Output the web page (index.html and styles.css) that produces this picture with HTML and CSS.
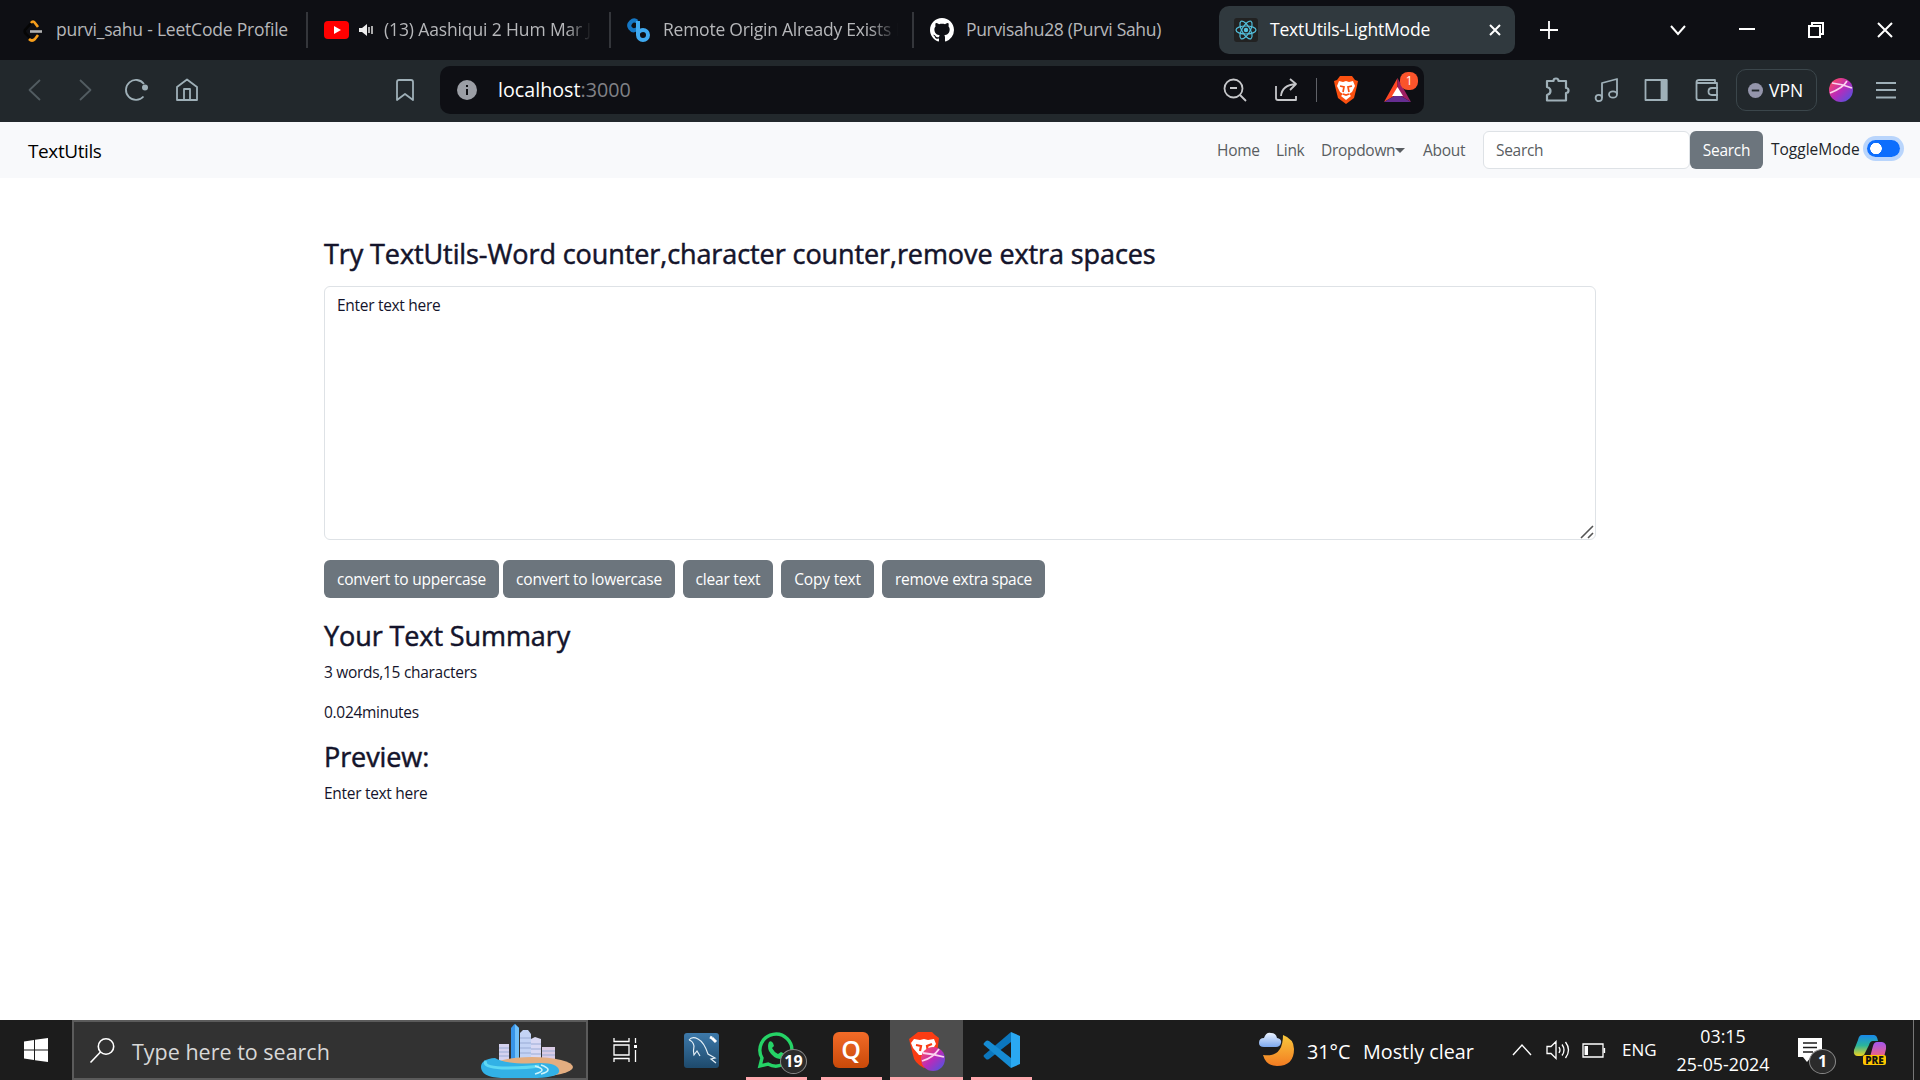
FILE: index.html
```html
<!DOCTYPE html>
<html lang="en">
<head>
<meta charset="utf-8">
<title>TextUtils-LightMode</title>
<link rel="stylesheet" href="styles.css">
</head>
<body>
<header class="tabs">
  <div class="tab t1">
    <svg class="fav" viewBox="0 0 24 24" fill="none" stroke-width="2.6"><path d="M12 2 3 12q-1 2 1 4l4 4" stroke="#050505"/><path d="M9 5q2-3 4 0l3 4M7 21q3 3 6 0l3-4" stroke="#f89f1b"/><path d="M8 13.500h12" stroke="#b3b3b3"/></svg>
    <span class="lbl l1">purvi_sahu - LeetCode Profile</span>
  </div>
  <div class="tab t2">
    <svg class="yt" viewBox="0 0 25 18"><rect width="25" height="18" rx="4" fill="#f00"/><path d="m10 5 7 4-7 4z" fill="#fff"/></svg>
    <svg class="snd" viewBox="0 0 16 14"><path d="M1 5h3l5-4v12L4 9H1z" fill="#eee"/><path d="M11 4v6M14 3v8" stroke="#eee" stroke-width="1.4"/></svg>
    <span class="lbl l2 fade">(13) Aashiqui 2 Hum Mar J</span>
  </div>
  <div class="tab t3">
    <svg class="fav" viewBox="0 0 24 24" fill="none" stroke-width="4"><path d="M10 3.500Q7 1 4 4T3 10q3 4 7 1" stroke="#1577c5"/><path d="M11 3v14a5 5 0 1 0 5-5q-3 0-5 3" stroke="#3fa9f0"/></svg>
    <span class="lbl l3 fade">Remote Origin Already Exists I</span>
  </div>
  <div class="tab t4">
    <svg class="fav" viewBox="0 0 16 16" fill="#fff"><path d="M8 0C3.58 0 0 3.58 0 8c0 3.54 2.29 6.53 5.47 7.59.4.07.55-.17.55-.38 0-.19-.01-.82-.01-1.49-2.01.37-2.53-.49-2.69-.94-.09-.23-.48-.94-.82-1.13-.28-.15-.68-.52-.01-.53.63-.01 1.08.58 1.23.82.72 1.21 1.87.87 2.33.66.07-.52.28-.87.51-1.07-1.78-.2-3.64-.89-3.64-3.95 0-.87.31-1.59.82-2.15-.08-.2-.36-1.02.08-2.12 0 0 .67-.21 2.2.82.64-.18 1.32-.27 2-.27s1.36.09 2 .27c1.53-1.04 2.2-.82 2.2-.82.44 1.1.16 1.92.08 2.12.51.56.82 1.27.82 2.15 0 3.07-1.87 3.75-3.65 3.95.29.25.54.73.54 1.48 0 1.07-.01 1.93-.01 2.2 0 .21.15.46.55.38A8.01 8.01 0 0 0 16 8c0-4.42-3.58-8-8-8"/></svg>
    <span class="lbl l4">Purvisahu28 (Purvi Sahu)</span>
  </div>
  <div class="tab t5">
    <svg class="fav" viewBox="0 0 24 24" fill="none" stroke="#53c1de" stroke-width="1.2"><rect width="24" height="24" rx="3" fill="#222" stroke="none"/><ellipse cx="12" cy="12" rx="10" ry="4"/><ellipse cx="12" cy="12" rx="10" ry="4" transform="rotate(60 12 12)"/><ellipse cx="12" cy="12" rx="10" ry="4" transform="rotate(120 12 12)"/><circle cx="12" cy="12" r="1.6" fill="#53c1de"/></svg>
    <span class="lbl l5">TextUtils-LightMode</span>
    <svg class="x" viewBox="0 0 12 12"><path d="m1 1 10 10M11 1 1 11" stroke="#fff" stroke-width="2"/></svg>
  </div>
  <svg class="plus" viewBox="0 0 18 18"><path d="M9 0v18M0 9h18" stroke="#fff" stroke-width="1.8"/></svg>
  <div class="win">
    <svg viewBox="0 0 16 16"><path d="m1 4 7 8 7-8"/></svg>
    <svg viewBox="0 0 16 16"><path d="M0 7h16"/></svg>
    <svg viewBox="0 0 16 16"><path d="M1 4h11v11H1zM4 4V1h11v11h-3"/></svg>
    <svg viewBox="0 0 16 16"><path d="m1 1 14 14M15 1 1 15"/></svg>
  </div>
</header>

<div class="toolbar">
  <svg class="i back dim" viewBox="0 0 24 24"><path d="M18 2 7.500 12 18 22"/></svg>
  <svg class="i fwd dim" viewBox="0 0 24 24"><path d="m6 2 10.500 10L6 22"/></svg>
  <svg class="i reload" viewBox="0 0 24 24"><path d="M19.500 18.500A10 10 0 1 1 20 6"/><circle cx="21" cy="9.500" r="3" fill="#9fb0b8" stroke="none"/></svg>
  <svg class="i home" viewBox="0 0 24 24"><path d="M2 9 12 1.500 22 9v13H2zM9 22V11h6v11"/></svg>
  <svg class="i mark" viewBox="0 0 24 24"><path d="M4 4q0-2 2-2h12q2 0 2 2v18l-8-6-8 6z"/></svg>
  <div class="url">
    <svg class="info" viewBox="0 0 20 20"><circle cx="10" cy="10" r="10" fill="#9b9ea5"/><path d="M10 9v6M10 5v2" stroke="#0f1014" stroke-width="2"/></svg>
    <span class="host"><b>localhost</b>:3000</span>
    <svg class="i lt zoom" viewBox="0 0 24 24"><circle cx="10.500" cy="10.500" r="9"/><path d="M7 10h7m3 7 6 6"/></svg>
    <svg class="i lt share" viewBox="0 0 24 24"><path d="M2 8v12q0 2 2 2h18v-4M7 18Q8 7 22 6M16 1l6 5-6 6"/></svg>
    <span class="bar"></span>
    <svg class="brave" viewBox="0 0 24 28"><path d="M6 0h12l3 4 3 1-1 5-3 12-8 6-8-6L1 10 0 5l3-1z" fill="#fb5010"/><path d="m5 5 4 1 3-1 3 1 4-1 2 5-3 6-3 2 2 2-5 4-5-4 2-2-3-2-3-6z" fill="#fff"/><path d="m6 10 4 1-1 5m9-6-4 1 1 5m-6 2 3 1 3-1" fill="none" stroke="#fb5010" stroke-width="1.700"/></svg>
    <span class="bat"><svg viewBox="0 0 27 24"><path d="M13.500 0 0 24l13.500-8z" fill="#ff4724"/><path d="m13.500 0 13.500 24-13.500-8z" fill="#9e1f63"/><path d="M0 24h27l-13.500-8z" fill="#662d91"/><path d="m13.500 9 5.500 9H8z" fill="#fff"/></svg><em>1</em></span>
  </div>
  <svg class="i puz" viewBox="0 0 24 24"><path stroke-width="2.200" d="M2 3h6.500q0-2.500 2.500-2.500T13.500 3H21v7q2.500 0 2.500 2.500T21 15v7.500H2V17q3.500-1 3.500-4T2 9z"/></svg>
  <svg class="i mus" viewBox="0 0 24 24"><path d="M8 20V5l15-4v15"/><circle cx="4.800" cy="20" r="3.200"/><ellipse cx="19" cy="16.500" rx="4" ry="3.200"/></svg>
  <svg class="i pan" viewBox="0 0 24 24"><path d="M1.500 2h21v20h-21z"/><path d="M17.500 2h5v20h-5z" fill="#9fb0b8"/></svg>
  <svg class="i wal" viewBox="0 0 24 24"><path d="M20 5V2H4Q1.500 2 1.500 4v16q0 2 2 2H22V5H4Q2 5 1.500 4M23 10h-6q-3.500 0-3.500 3.500T17 17h6"/></svg>
  <div class="vpn"><svg viewBox="0 0 16 16"><circle cx="8" cy="8" r="8" fill="#9495ab"/><path d="M4 8h8" stroke="#22282c" stroke-width="2"/></svg><span>VPN</span></div>
  <svg class="orb" viewBox="0 0 24 24"><defs><linearGradient id="g" x1="0" y1="0" x2="1" y2="1"><stop offset=".1" stop-color="#fa4a66"/><stop offset=".5" stop-color="#b92bba"/><stop offset="1" stop-color="#3e5be6"/></linearGradient></defs><circle cx="12" cy="12" r="12" fill="url(#g)"/><path d="M3 5q10 1 20 5M1 15Q14 10 18 3" stroke="#fbd3ef" stroke-width="1.600" fill="none"/></svg>
  <svg class="i menu" viewBox="0 0 24 24"><path d="M2 5h20M2 12h20M2 19.500h20"/></svg>
</div>

<nav class="nav">
  <a class="brand">TextUtils</a>
  <a class="n1">Home</a><a class="n2">Link</a><a class="n3">Dropdown<span class="caret"></span></a><a class="n4">About</a>
  <div class="field">Search</div><button class="btn sbtn">Search</button>
  <span class="mode">ToggleMode</span><span class="switch"></span>
</nav>

<main class="main">
  <h3>Try TextUtils-Word counter,character counter,remove extra spaces</h3>
  <div class="area">Enter text here
    <svg class="grip" viewBox="0 0 14 14"><path d="M1 13 13 1M8 13l5-5" stroke="#555" stroke-width="1.600"/></svg></div>
  <div class="btns">
    <button class="btn b1">convert to uppercase</button>
    <button class="btn b2">convert to lowercase</button>
    <button class="btn b3">clear text</button>
    <button class="btn b4">Copy text</button>
    <button class="btn b5">remove extra space</button>
  </div>
  <h3>Your Text Summary</h3>
  <p>3 words,15 characters</p>
  <p>0.024minutes</p>
  <h3>Preview:</h3>
  <p>Enter text here</p>
</main>

<footer class="task">
  <svg class="start" viewBox="0 0 24 24" fill="#fff"><path d="m0 3.400 10-1.400v9.400H0zM11 1.800 24 0v11.400H11zM0 12.500h10V22L0 20.600zM11 12.500h13V24l-13-1.800z"/></svg>
  <div class="find">
    <svg class="glass" viewBox="0 0 25 25" fill="none" stroke="#fff" stroke-width="1.600"><circle cx="16" cy="8.500" r="7.700"/><path d="M10.500 14 .5 24.500"/></svg>
    <span>Type here to search</span>
    <svg class="city" viewBox="0 0 92 54"><path d="M18 20h10v20H18z" fill="#d4d2ee"/><path d="M30 4l3.500-4L38 4v34h-8z" fill="#3794e8"/><path d="M34 0l4 4v34h-4z" fill="#6fc0fa"/><path d="M39 9l3-3h5l3 4v28H39z" fill="#c3d3f5"/><path d="M50 15l4-2 6 2v23H50z" fill="#d9d9f4"/><path d="M61 23h13v16H61z" fill="#d9cbe5"/><path d="M18 24h10m-10 4h10m-10 4h10M39 14h11m-11 5h11m-11 5h11m-11 5h11m0-9h10m-10 5h10m-10 5h10m1-3h13m-13 4h13" stroke="#9aabd6" stroke-width="1.200"/><ellipse cx="51" cy="43" rx="41" ry="10" fill="#e3ad80"/><path d="M14 34Q0 35 0 43q0 10 20 11h36q24-1 22-8-2-7-18-7-34 2-46-5z" fill="#32b1e6"/><path d="M5 37q-4 6 16 7 26 0 37-2" stroke="#5fd8f3" stroke-width="3" fill="none"/><path d="M54 42q14 4 0 8m6-9q14 5 0 9" stroke="#c9f3fb" stroke-width="1.600" fill="none"/></svg>
  </div>
  <svg class="tv" viewBox="0 0 25 24" fill="none" stroke="#fff" stroke-width="1.300"><path d="M1 0v3.500h15V0M1 24v-3.500h15V24M1 7h15v10H1zM22.500 0v5M22.500 12v12"/><path d="M21 7h3v3h-3z" fill="#fff" stroke="none"/></svg>
  <svg class="sql" viewBox="0 0 35 35"><defs><linearGradient id="s" x2="0" y2="1"><stop stop-color="#3d79aa"/><stop offset="1" stop-color="#1e4a6c"/></linearGradient></defs><rect width="35" height="35" rx="3" fill="url(#s)"/><path d="M5 7q3-4 9-1 6 3 10 15l7 4-4 1 5 4M5 7q4 1 5 6-1 5 0 9l3-4 3 5" fill="none" stroke="#e4eff6" stroke-width="1.200"/><path d="m26 4 2 1m0 0 4 4" fill="none" stroke="#fff" stroke-width="3"/></svg>
  <div class="app wa"><svg viewBox="0 0 36 36"><path d="M2 34 4 26A16 16 0 1 1 10 32z" fill="none" stroke="#25d366" stroke-width="3.400"/><path d="M11 10q2-2 4 1l1 3-2 2q2 4 6 6l3-2 4 2q0 5-5 5-7-1-11-8-2-5 0-9" fill="#25d366"/></svg><em>19</em></div>
  <div class="app q"><span>Q</span></div>
  <div class="app br"><svg viewBox="0 0 36 40"><path d="M9 0h14l3 3 4 3-2 16q-3 7-13 14Q5 31 4 23L0 7l4-3z" fill="#fb3c13"/><path d="m5 7 6 1 4-1 4 1 6-1 2 5-6 9-3 2-8 0-6-7-2-5z" fill="#fff"/><path d="m7 13 5 1-1 5m12-7-5 2 1 6" stroke="#fb3c13" stroke-width="2.200" fill="none"/><circle cx="24" cy="27" r="12" fill="url(#g)"/><path d="M14 21q10 1 21 4M13 29q11-3 17-12" stroke="#fbd3ef" stroke-width="1.800" fill="none"/></svg></div>
  <div class="app vs"><svg viewBox="0 0 36 36"><path d="M27 0v10L5 27q-2 1-3 0l-2-2q-1-1 0-2z" fill="#0b76bd"/><path d="M27 36V26L5 9Q3 8 2 9l-2 2q-1 1 0 2z" fill="#168bd2"/><path d="m27 0 9 4v28l-9 4z" fill="#2aa8f2"/></svg></div>
  <svg class="moon" viewBox="0 0 35 36"><defs><linearGradient id="o" x2="0" y2="1"><stop stop-color="#f9c83c"/><stop offset="1" stop-color="#f37c22"/></linearGradient><linearGradient id="c" x2="0" y2="1"><stop stop-color="#eaf2ff"/><stop offset="1" stop-color="#7ca8ee"/></linearGradient></defs><path d="M24 3q11 4 11 14 0 17-17 17Q7 34 4 23q20 3 20-20z" fill="url(#o)"/><path d="M5 15q-5 0-5-4 0-5 5-5Q7 0 12 1q5 0 6 5 5 1 4 5-1 4-5 4z" fill="url(#c)"/></svg>
  <span class="temp">31°C</span><span class="wx">Mostly clear</span>
  <svg class="up" viewBox="0 0 18 12"><path d="m0 11 9-10 9 10" fill="none" stroke="#fff" stroke-width="1.400"/></svg>
  <svg class="vol" viewBox="0 0 24 20" fill="none" stroke="#fff" stroke-width="1.300"><path d="M1 6.500h4l5-5v17l-5-5H1zM13 7q2 3 0 6M16 4.500q4 5.500 0 11M19.500 2q6 8 0 16"/></svg>
  <svg class="batt" viewBox="0 0 23 13"><path d="M1 0h20v13H1zM22.500 4v5" fill="none" stroke="#fff" stroke-width="1.300"/><path d="M2.500 2H6v9H2.500z" fill="#fff"/></svg>
  <span class="eng">ENG</span>
  <div class="clock"><span>03:15</span><span>25-05-2024</span></div>
  <div class="note"><svg viewBox="0 0 24 24"><path d="M0 0h24v19H13l-4 5-4-5H0z" fill="#fff"/><path d="M5 5h14M5 9.500h14M5 14h10" stroke="#1c1c1c" stroke-width="1.300"/></svg><em>1</em></div>
  <div class="cop"><svg viewBox="0 0 32 30"><defs><linearGradient id="p" x2="0" y2="1"><stop stop-color="#1888ea"/><stop offset=".5" stop-color="#2bb59b"/><stop offset="1" stop-color="#f0d41e"/></linearGradient><linearGradient id="r" x2="0" y2="1"><stop stop-color="#a456f0"/><stop offset="1" stop-color="#f2637a"/></linearGradient></defs><path d="M8 0h12q3 0 4 6h-5q-3 0-4 4l-4 8q-1 3-4 3H4q-5 0-4-6L4 5q1-5 4-5" fill="url(#p)"/><path d="M23 7h5q5 1 4 7l-2 8H16l3-11q1-4 4-4" fill="url(#r)"/></svg><em>PRE</em></div>
  <span class="edge"></span>
</footer>
</body>
</html>
```
FILE: styles.css
```css
* { box-sizing: border-box; }
body { margin: 0; width: 1920px; height: 1080px; overflow: hidden; display: flex; flex-direction: column; background: #fff; font: 15.5px/24px "Open Sans", "Noto Sans", sans-serif; letter-spacing: -.3px; color: #212529; }
svg { display: block; flex: none; overflow: visible; }
em, b { font-style: normal; font-weight: inherit; }
span, a { white-space: nowrap; }

.tabs { height: 60px; background: #0e0f14; display: flex; align-items: center; flex: none; }
.tab { display: flex; align-items: center; height: 36px; color: #b6b7ba; font-size: 17.5px; border-right: 2px solid #34363b; flex: none; }
.t1 { width: 308px; padding-left: 22px; }
.t2 { width: 303px; padding-left: 16px; }
.t3 { width: 303px; padding-left: 16px; }
.t4 { width: 305px; padding-left: 16px; border: 0; }
.t5 { width: 296px; height: 48px; padding-left: 15px; border: 0; border-radius: 10px; background: #30393e; color: #fff; }
.fav { width: 24px; height: 24px; }
.yt { width: 25px; height: 18px; }
.snd { width: 16px; height: 14px; margin-left: 9px; }
.lbl { margin-left: 12px; margin-top: -3px; }
.l1 { margin-left: 10px; letter-spacing: -.21px; }
.l2 { margin-left: 10px; width: 212px; letter-spacing: -.13px; }
.l3 { width: 240px; letter-spacing: -.24px; }
.l4 { letter-spacing: -.33px; }
.l5 { width: 206px; letter-spacing: -.18px; }
.fade { -webkit-mask-image: linear-gradient(90deg, #000 86%, transparent 98%); mask-image: linear-gradient(90deg, #000 86%, transparent 98%); }
.x { width: 12px; height: 12px; margin-left: 13px; }
.plus { width: 18px; height: 18px; margin-left: 25px; }
.win { display: flex; gap: 53px; margin-left: 112px; }
.win svg { width: 16px; height: 16px; fill: none; stroke: #fff; stroke-width: 2; }

.toolbar { height: 62px; padding-bottom: 2px; background: #22282c; display: flex; align-items: center; flex: none; }
.i { width: 24px; height: 24px; fill: none; stroke: #9fb0b8; stroke-width: 1.8; stroke-linejoin: round; }
.dim { stroke: #525c61; }
.lt { stroke: #c6c7ca; }
.back { margin-left: 22px; }
.fwd { margin-left: 28px; }
.reload { margin-left: 26px; }
.home { margin-left: 27px; }
.mark { margin-left: 194px; }
.url { width: 984px; height: 48px; margin-left: 23px; background: #0e0f14; border-radius: 10px; display: flex; align-items: center; }
.info { width: 20px; height: 20px; margin-left: 17px; }
.host { width: 725px; margin-left: 21px; font-size: 19.700px; letter-spacing: 0; color: #808186; }
.host b { color: #fff; }
.share { margin-left: 27px; }
.bar { width: 1px; height: 24px; background: #606268; margin-left: 18px; }
.brave { width: 24px; height: 28px; margin-left: 17px; }
.bat { position: relative; margin-left: 26px; }
.bat svg { width: 27px; height: 24px; }
.bat em { position: absolute; left: 16px; top: -6px; width: 18px; height: 18px; border-radius: 8px; background: #fb542b; color: #fff; font-size: 12px; line-height: 18px; text-align: center; }
.puz { margin-left: 121px; }
.mus { margin-left: 25px; }
.pan { margin-left: 26px; }
.wal { margin-left: 27px; }
.vpn { width: 81px; height: 42px; margin-left: 17px; border: 1.5px solid #3b464b; border-radius: 10px; display: flex; align-items: center; gap: 6px; padding-left: 11px; color: #fff; font-size: 17.5px; letter-spacing: 0; }
.vpn svg { width: 15px; height: 15px; }
.vpn span { margin-top: -1px; }
.orb { width: 24px; height: 24px; margin-left: 12px; }
.menu { margin-left: 21px; }

.nav { height: 56px; background: #f8f9fb; display: flex; align-items: center; flex: none; color: #595d61; }
.brand { width: 1189px; margin-left: 28px; padding-top: 1px; font-size: 19px; letter-spacing: -.4px; color: #000; }
.n1 { width: 59px; }
.n2 { width: 45px; }
.n3 { width: 102px; display: flex; align-items: center; }
.caret { border: 5px solid transparent; border-top-color: #595d61; border-bottom: 0; }
.n4 { width: 60px; }
.field { width: 207px; height: 38px; border: 1px solid #dee2e6; border-radius: 6px; background: #fff; padding: 6px 12px; }
.btn { height: 38px; border: 0; border-radius: 6px; background: #6c757d; color: #fff; font: inherit; letter-spacing: -.2px; padding: 0; text-align: center; }
.sbtn { width: 73px; letter-spacing: -.3px; }
.mode { width: 97px; margin-left: 8px; color: #212529; margin-top: -2px; letter-spacing: 0; }
.switch { width: 33px; height: 17px; border-radius: 9px; background: radial-gradient(circle at 9px 8.5px, #fff 5.5px, #0d6efd 6px); box-shadow: 0 0 0 4px #b9d5fc; margin: -3px 0 0 -1px; }

.main { width: 1272px; margin: 59px 0 0 324px; flex: 1; color: #14142b; }
h3 { margin: 0 0 7px; font-size: 27px; line-height: 34px; font-weight: 500; letter-spacing: -.09px; -webkit-text-stroke: .5px #14142b; white-space: nowrap; }
p { margin: 0 0 16px; }
.area { position: relative; height: 254px; margin-top: 15px; border: 1px solid #dee2e6; border-radius: 6px; padding: 6px 12px; }
.grip { position: absolute; right: 1px; bottom: 0; width: 14px; height: 14px; }
.btns { display: flex; margin: 20px 0 21px; gap: 8px; }
.b1 { width: 175px; margin-right: -4px; }
.b2 { width: 172px; }
.b3 { width: 90px; }
.b4 { width: 93px; }
.b5 { width: 163px; letter-spacing: -.28px; }

.task { height: 60px; background: #1c1c1c; display: flex; align-items: center; flex: none; color: #fff; font-size: 19.800px; letter-spacing: 0; }
.start { width: 24px; height: 24px; margin-left: 24px; }
.find { width: 516px; height: 60px; margin-left: 24px; border: 2px solid #5b5b5b; background: #323232; color: #d8d8d8; font-size: 21.5px; display: flex; align-items: center; flex: none; }
.glass { width: 25px; height: 25px; margin-left: 16px; }
.find span { width: 349px; margin-left: 17px; padding-top: 3px; }
.city { width: 92px; height: 54px; margin-top: 2px; }
.tv { width: 25px; height: 24px; margin-left: 25px; }
.sql { width: 35px; height: 35px; margin-left: 46px; }
.app { position: relative; width: 61px; height: 60px; border-bottom: 3px solid #ffa8ae; display: flex; align-items: center; justify-content: center; flex: none; }
.app svg { width: 36px; height: 36px; margin-top: 2px; }
.wa { margin-left: 27px; }
.app em, .note em { position: absolute; border: 1px solid #8a8a8a; border-radius: 50%; background: #2b2b2b; text-align: center; font-size: 16px; line-height: 23px; width: 27px; height: 25px; font-weight: 700; }
.app em { left: 34px; top: 29px; }
.app.wa svg { margin-right: 2px; }
.q { margin-left: 14px; }
.q span { width: 36px; height: 36px; margin-top: 2px; margin-right: 1px; border-radius: 6px; background: linear-gradient(#f26b28, #c94909); font: 600 25px/34px "Open Sans", sans-serif; text-align: center; }
.br { margin-left: 8px; width: 73px; background: #4d4d4d; }
.app.br svg { height: 40px; margin-top: 6px; }
.vs { margin-left: 8px; }
.moon { width: 35px; height: 36px; margin-left: 227px; }
.temp { width: 57px; margin-left: 13px; padding-top: 3px; }
.wx { width: 150px; margin-left: -1px; padding-top: 3px; }
.up { width: 18px; height: 12px; }
.vol { width: 24px; height: 20px; margin-left: 15px; }
.batt { width: 23px; height: 13px; margin-left: 12px; }
.eng { width: 54px; margin-left: 17px; font-size: 17px; }
.clock { width: 94px; display: flex; flex-direction: column; align-items: center; font-size: 17.800px; line-height: 28px; }
.note { position: relative; margin-left: 28px; }
.note svg { width: 24px; height: 24px; }
.note em { left: 11px; top: 11px; }
.cop { position: relative; margin-left: 32px; }
.cop svg { width: 32px; height: 30px; }
.cop em { position: absolute; left: 9px; top: 20px; width: 23px; height: 10px; border-radius: 2px; background: #fdc500; color: #111; font-size: 10px; font-weight: 800; line-height: 10px; text-align: center; }
.edge { width: 1px; height: 60px; background: #777; margin-left: 27px; }
```
